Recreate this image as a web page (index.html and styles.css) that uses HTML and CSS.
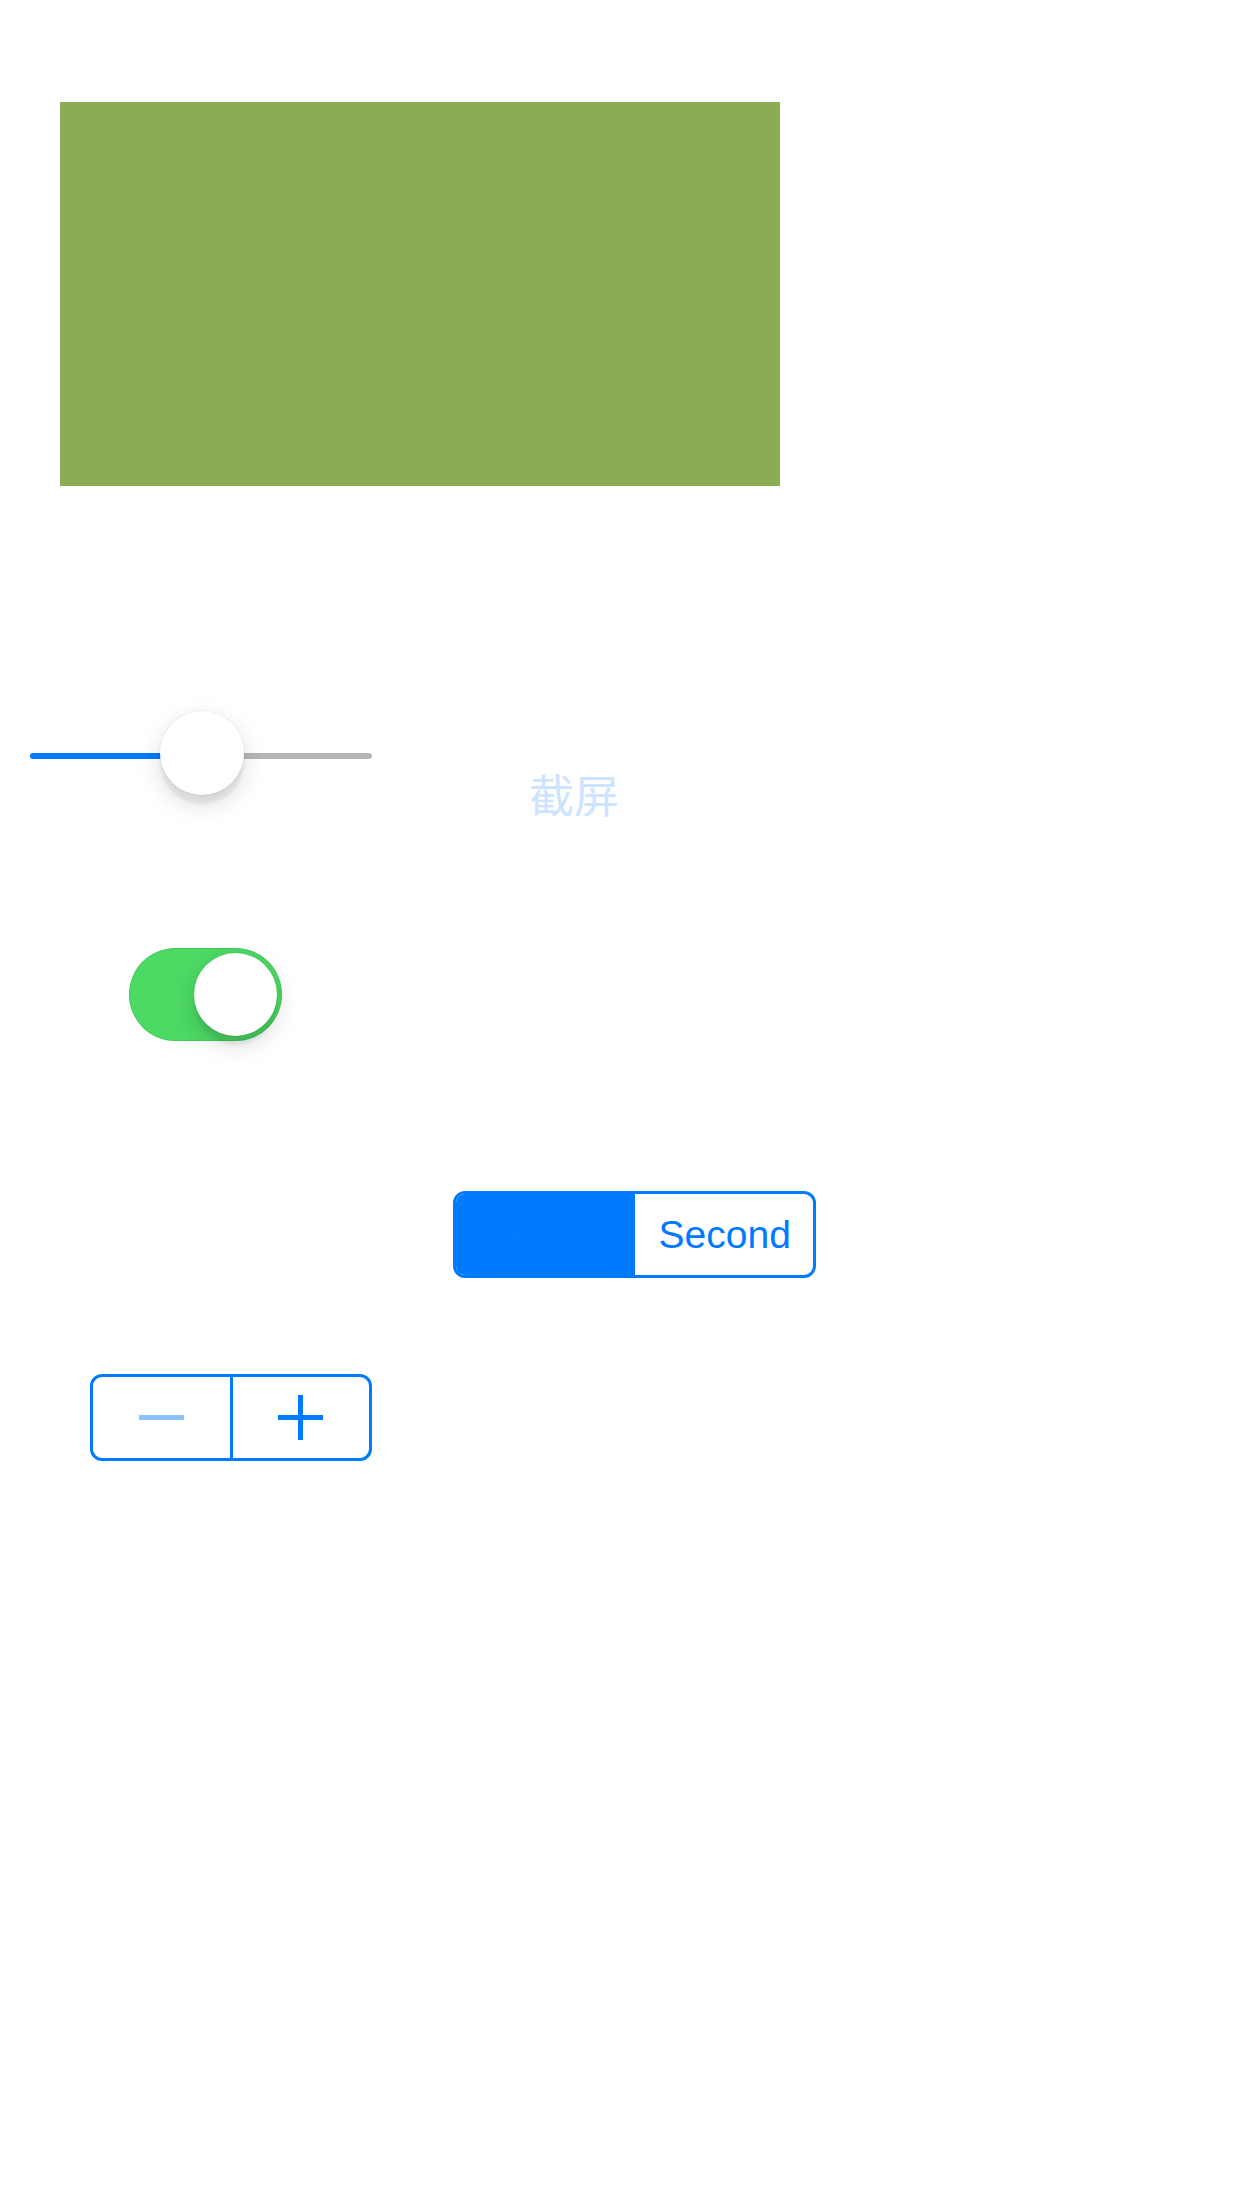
FILE: index.html
```html
<!DOCTYPE html>
<html lang="zh">
<head>
<meta charset="utf-8">
<title>Controls</title>
<link rel="stylesheet" href="styles.css">
</head>
<body>
<div class="page">
  <div class="green-box"></div>

  <div class="slider-row">
    <div class="slider">
      <div class="track">
        <div class="track-fill"></div>
        <div class="track-rest"></div>
      </div>
      <div class="thumb"></div>
    </div>
    <div class="shot-label">截屏</div>
  </div>

  <div class="switch">
    <div class="switch-knob"></div>
  </div>

  <div class="segmented">
    <div class="segment selected">First</div>
    <div class="segment">Second</div>
  </div>

  <div class="stepper">
    <div class="step step-minus">
      <svg width="45" height="45" viewBox="0 0 45 45"><rect x="0" y="20" width="45" height="5" fill="#8cc3ff"/></svg>
    </div>
    <div class="step step-plus">
      <svg width="45" height="45" viewBox="0 0 45 45"><rect x="0" y="20" width="45" height="5" fill="#007aff"/><rect x="20" y="0" width="5" height="45" fill="#007aff"/></svg>
    </div>
  </div>
</div>
</body>
</html>
```

FILE: styles.css
```css
* { box-sizing: border-box; }

html, body {
  margin: 0;
  padding: 0;
  background: #ffffff;
}

body {
  font-family: "Liberation Sans", Arial, sans-serif;
}

.page {
  width: 1242px;
  min-height: 2208px;
  padding-top: 102px;
  display: flex;
  flex-direction: column;
  align-items: flex-start;
}

.green-box {
  width: 720px;
  height: 384px;
  margin-left: 60px;
  background: #8aac52;
}

.slider-row {
  display: flex;
  align-items: flex-start;
  margin-top: 225px;
}

.slider {
  position: relative;
  width: 342px;
  height: 84px;
  margin-left: 30px;
}

.track {
  display: flex;
  width: 100%;
  height: 6px;
  margin-top: 42px;
  border-radius: 3px;
  overflow: hidden;
}

.track-fill {
  width: 172px;
  background: #007aff;
}

.track-rest {
  flex: 1;
  background: #b6b6b6;
}

.thumb {
  position: absolute;
  left: 130px;
  top: 0;
  width: 84px;
  height: 84px;
  border-radius: 50%;
  background: #ffffff;
  box-shadow: 0 9px 24px rgba(0, 0, 0, 0.15), 0 9px 3px rgba(0, 0, 0, 0.06), 0 0 0 1px rgba(0, 0, 0, 0.04);
}

.shot-label {
  margin-left: 157px;
  margin-top: 60px;
  font-family: "Noto Sans CJK SC", sans-serif;
  font-size: 45px;
  line-height: 1;
  color: #cce4ff;
}

.switch {
  position: relative;
  width: 153px;
  height: 93px;
  margin-top: 132px;
  margin-left: 129px;
  border-radius: 47px;
  background: #4cd964;
  box-shadow: inset 0 0 0 1px rgba(40, 160, 60, 0.25);
}

.switch-knob {
  position: absolute;
  right: 5px;
  top: 5px;
  width: 83px;
  height: 83px;
  border-radius: 50%;
  background: #ffffff;
  box-shadow: 0 9px 24px rgba(0, 0, 0, 0.15), 0 9px 3px rgba(0, 0, 0, 0.06), 0 0 0 1px rgba(0, 0, 0, 0.04);
}

.segmented {
  display: flex;
  width: 363px;
  height: 87px;
  margin-top: 150px;
  margin-left: 453px;
  border: 3px solid #007aff;
  border-radius: 12px;
  overflow: hidden;
}

.segment {
  flex: 1;
  display: flex;
  align-items: center;
  justify-content: center;
  font-size: 39px;
  color: #007aff;
  padding-left: 2px;
}

.segment.selected {
  background: #007aff;
  color: #027bff;
}

.stepper {
  display: flex;
  width: 282px;
  height: 87px;
  margin-top: 96px;
  margin-left: 90px;
  border: 3px solid #007aff;
  border-radius: 12px;
}

.step {
  flex: 1;
  display: flex;
  align-items: center;
  justify-content: center;
}

.step-minus {
  border-right: 3px solid #007aff;
}

.step svg {
  display: block;
}
```
